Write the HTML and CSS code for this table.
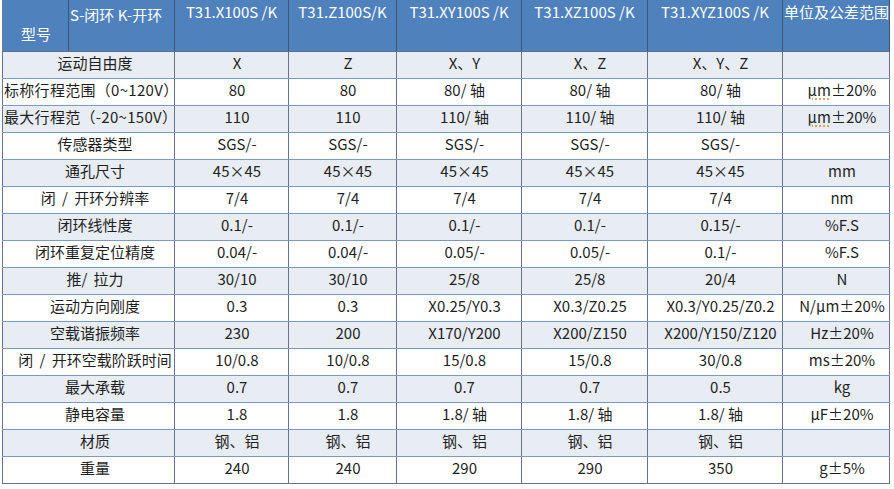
FILE: index.html
```html
<!DOCTYPE html>
<html lang="zh">
<head>
<meta charset="utf-8">
<title>T31 参数表</title>
<link rel="stylesheet" href="styles.css">
</head>
<body>
<table class="spec">
  <colgroup>
    <col class="c-a"><col class="c-b"><col class="c-1"><col class="c-2"><col class="c-3"><col class="c-4"><col class="c-5"><col class="c-u">
  </colgroup>
  <thead>
    <tr class="head">
      <th class="h-model">型号</th>
      <th class="h-note">S-闭环 K-开环</th>
      <th>T31.X100S /K</th>
      <th>T31.Z100S/K</th>
      <th>T31.XY100S /K</th>
      <th>T31.XZ100S /K</th>
      <th>T31.XYZ100S /K</th>
      <th class="h-unit">单位及公差范围</th>
    </tr>
  </thead>
  <tbody>
    <tr class="alt"><td class="name" colspan="2">运动自由度</td><td>X</td><td>Z</td><td>X、Y</td><td>X、Z</td><td>X、Y、Z</td><td class="unit"></td></tr>
    <tr><td class="name tight" colspan="2">标称行程范围（0~120V）</td><td>80</td><td>80</td><td>80/ 轴</td><td>80/ 轴</td><td>80/ 轴</td><td class="unit"><span class="spell">μm</span>±20%</td></tr>
    <tr class="alt"><td class="name tight" colspan="2">最大行程范（-20~150V）</td><td>110</td><td>110</td><td>110/ 轴</td><td>110/ 轴</td><td>110/ 轴</td><td class="unit"><span class="spell">μm</span>±20%</td></tr>
    <tr><td class="name" colspan="2">传感器类型</td><td>SGS/-</td><td>SGS/-</td><td>SGS/-</td><td>SGS/-</td><td>SGS/-</td><td class="unit"></td></tr>
    <tr class="alt"><td class="name" colspan="2">通孔尺寸</td><td>45×45</td><td>45×45</td><td>45×45</td><td>45×45</td><td>45×45</td><td class="unit">mm</td></tr>
    <tr><td class="name" colspan="2">闭 / 开环分辨率</td><td>7/4</td><td>7/4</td><td>7/4</td><td>7/4</td><td>7/4</td><td class="unit">nm</td></tr>
    <tr class="alt"><td class="name" colspan="2">闭环线性度</td><td>0.1/-</td><td>0.1/-</td><td>0.1/-</td><td>0.1/-</td><td>0.15/-</td><td class="unit">%F.S</td></tr>
    <tr><td class="name" colspan="2">闭环重复定位精度</td><td>0.04/-</td><td>0.04/-</td><td>0.05/-</td><td>0.05/-</td><td>0.1/-</td><td class="unit">%F.S</td></tr>
    <tr class="alt"><td class="name" colspan="2">推/ 拉力</td><td>30/10</td><td>30/10</td><td>25/8</td><td>25/8</td><td>20/4</td><td class="unit">N</td></tr>
    <tr><td class="name" colspan="2">运动方向刚度</td><td>0.3</td><td>0.3</td><td>X0.25/Y0.3</td><td>X0.3/Z0.25</td><td>X0.3/Y0.25/Z0.2</td><td class="unit">N/μm±20%</td></tr>
    <tr class="alt"><td class="name" colspan="2">空载谐振频率</td><td>230</td><td>200</td><td>X170/Y200</td><td>X200/Z150</td><td>X200/Y150/Z120</td><td class="unit">Hz±20%</td></tr>
    <tr><td class="name" colspan="2">闭 / 开环空载阶跃时间</td><td>10/0.8</td><td>10/0.8</td><td>15/0.8</td><td>15/0.8</td><td>30/0.8</td><td class="unit">ms±20%</td></tr>
    <tr class="alt"><td class="name" colspan="2">最大承载</td><td>0.7</td><td>0.7</td><td>0.7</td><td>0.7</td><td>0.5</td><td class="unit">kg</td></tr>
    <tr><td class="name" colspan="2">静电容量</td><td>1.8</td><td>1.8</td><td>1.8/ 轴</td><td>1.8/ 轴</td><td>1.8/ 轴</td><td class="unit">μF±20%</td></tr>
    <tr class="alt"><td class="name" colspan="2">材质</td><td>钢、铝</td><td>钢、铝</td><td>钢、铝</td><td>钢、铝</td><td>钢、铝</td><td class="unit"></td></tr>
    <tr><td class="name" colspan="2">重量</td><td>240</td><td>240</td><td>290</td><td>290</td><td>350</td><td class="unit">g±5%</td></tr>
  </tbody>
</table>
</body>
</html>
```

FILE: styles.css
```css
html, body {
  margin: 0;
  padding: 0;
  background: #ffffff;
}

body {
  font-family: "Noto Sans CJK SC", "Noto Sans", sans-serif;
  font-size: 15px;
  color: #1f1f1f;
}

.spec {
  margin-left: 2px;
  width: 887px;
  table-layout: fixed;
  border-collapse: collapse;
}

.c-a { width: 66px; }
.c-b { width: 106px; }
.c-1 { width: 114px; }
.c-2 { width: 108px; }
.c-3 { width: 125px; }
.c-4 { width: 126px; }
.c-5 { width: 135px; }
.c-u { width: 107px; }

.head th {
  height: 51px;
  box-sizing: border-box;
  padding: 2px 0 0 0;
  vertical-align: top;
  background: #4f81bd;
  color: #ffffff;
  font-weight: normal;
  line-height: 20px;
  white-space: nowrap;
  text-align: center;
  border-left: 1px solid #3e5578;
  border-right: 1px solid #3e5578;
  border-top: none;
  border-bottom: 1px solid #5d7397;
}

.head th.h-model {
  text-align: left;
  padding: 24px 0 0 18px;
  border-left: 1px solid #6f7d95;
}

.head th.h-note {
  text-align: left;
  padding: 5px 0 0 1px;
}

.head th.h-unit {
  text-align: left;
  padding-left: 1px;
}

tbody td {
  height: 27px;
  box-sizing: border-box;
  padding: 0 0 4px 11px;
  line-height: 22px;
  text-align: center;
  white-space: nowrap;
  overflow: hidden;
  background: #ffffff;
  border-top: 1px solid #7e97c4;
  border-bottom: 1px solid #7e97c4;
  border-left: 1px solid #66758e;
  border-right: 1px solid #66758e;
}

tbody tr.alt td {
  background: #e8ecf3;
}

tbody td.name {
  padding-left: 13px;
  word-spacing: 3px;
}

tbody td.name.tight {
  text-align: left;
  padding-left: 1px;
  padding-right: 0;
  letter-spacing: 0.3px;
  overflow: visible;
}

tbody td.unit {
  padding-left: 12px;
}

tbody tr:last-child td {
  border-bottom: 1px solid #66758e;
}

.spell {
  text-decoration: underline dotted #d08a3a;
  text-underline-offset: 3px;
}
```
